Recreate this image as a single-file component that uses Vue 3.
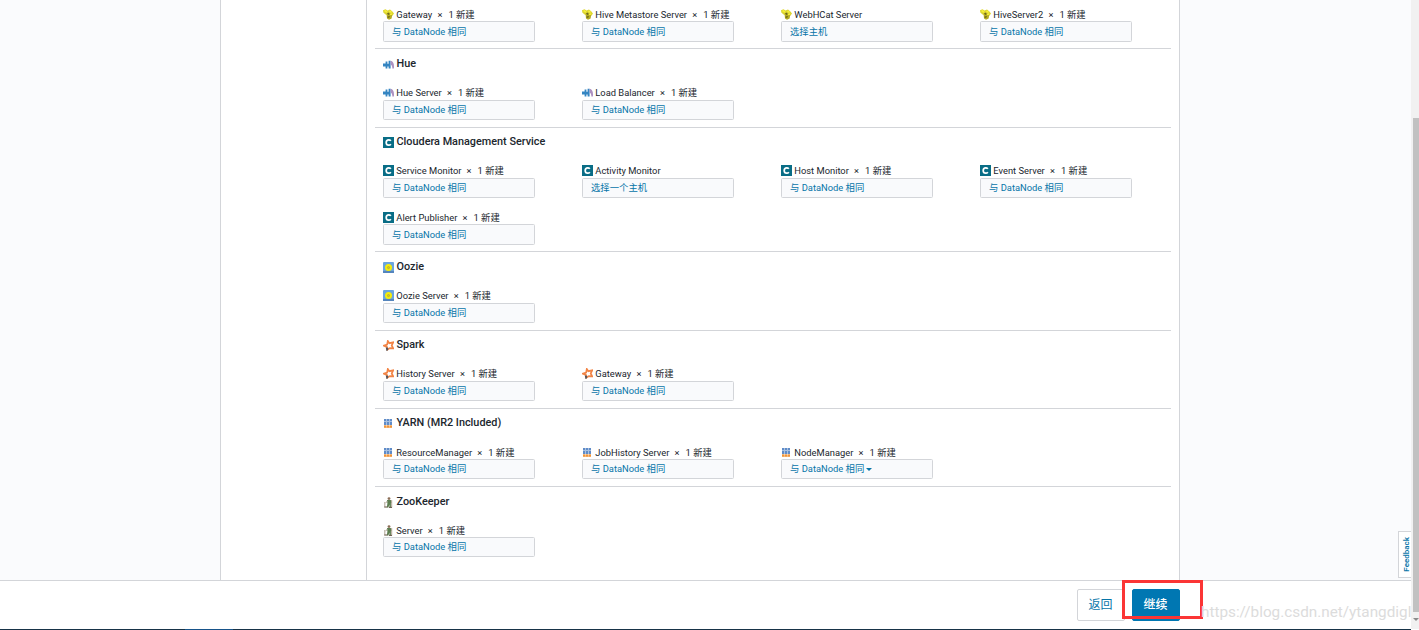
<template>
  <div class="page">
    <svg class="defs" aria-hidden="true">
      <symbol id="icon-hive" viewBox="0 0 11 11">
        <path d="M0 1.2 2.5.2l2 1.2L7 .6l2.2 1.6L11 4.5 9.4 6.8 6 6.4 2.5 5.6.3 3.4z" fill="#dcd632" />
        <path d="M3.5 4.6 7 4l2.2 2-.6 3.4L6 10.8 4 9.6z" fill="#b5ac24" />
        <path d="M4 4.4 5.6 3.6l1 1.4-1 1zM4.5 7.6l2.4-.6-.4 1.4-1.8.7z" fill="#6d661a" />
        <path d="M1.6 1.5 4 3M6.5 2l2 1.4M7 5.4l2-.4" stroke="#f7ef3b" stroke-width="1.5" />
      </symbol>
      <symbol id="icon-hue" viewBox="0 0 11 11">
        <path d="M0 4.6h2.6V2.6h1.8v2.2h1.2V1.8h2V9.6h-2V7.4H4.4v2H2.6V7.4H0z" fill="#3485c2" />
        <path d="M7.6 1.8Q11.6 2.6 10.9 9.6H9.3Q9.6 6.4 7.6 5.6z" fill="#ad91c1" />
      </symbol>
      <symbol id="icon-cloudera" viewBox="0 0 11 11">
        <path d="M0 0h11v11H0z" fill="#096d86" />
        <path d="M7.9 3.8Q7 2.8 5.7 2.8 3.2 2.8 3.2 5.5t2.5 2.7Q7 8.2 7.9 7.2" fill="none" stroke="#fff" stroke-width="1.7" />
      </symbol>
      <symbol id="icon-oozie" viewBox="0 0 11 11">
        <rect width="11" height="11" rx="1" fill="#6ba5df" />
        <path d="M0 9h11v2H0z" fill="#5585bd" />
        <circle cx="5.5" cy="5.6" r="3.5" fill="#f4ec0c" />
        <circle cx="5.5" cy="5.6" r="1.1" fill="#d8bf31" stroke="#9ba03c" stroke-width=".5" />
      </symbol>
      <symbol id="icon-spark" viewBox="0 0 11 11">
        <path d="m4.8 1 1.5 2.2 3.9-.8-1.5 3 1.5 3-3.4-.3-2.3 1.5-.6-2.7L.8 5.6l3.3-1z" fill="none" stroke="#f28445" stroke-width="1.7" />
        <path d="m2.8 7.4 2.5.4-.3 2.4-1.6.7z" fill="#55555b" />
      </symbol>
      <symbol id="icon-yarn" viewBox="0 0 11 11">
        <path d="M1 1h8v6H1z" fill="#a9c1e1" />
        <path d="M1 1h2v2H1zm3 0h2v2H4zm3 0h2v2H7zM1 4h2v3H1zm3 0h2v3H4zm3 0h2v3H7z" fill="#5f8cc8" />
        <path d="M1 7.4h8v2.6H1z" fill="#f6bd80" />
        <path d="M1 7.6h2v2H1zm3 0h2v2H4zm3 0h2v2H7z" fill="#f0943a" />
      </symbol>
      <symbol id="icon-zookeeper" viewBox="0 0 11 11">
        <circle cx="6" cy="1.6" r="1.4" fill="#8b6e57" />
        <path d="M4 3h3.8l1 2.6-.9.6v4.3H6.4V7.6l-1 3H3.8L4.4 6.5z" fill="#5d7e50" />
        <path d="M4.4 4 2.6 6.2M1.8 5v5.5M8.7 3v7.5" stroke="#b0a596" />
        <path d="M1.4 10h3M6 10.4h3" stroke="#665747" />
      </symbol>
    </svg>

    <div class="viewport">
      <div class="content">
        <aside class="side"></aside>
        <div class="steps"></div>
        <main class="panel">
          <section v-for="(service, i) in services" :key="i" class="service">
            <h4 v-if="service.name" class="service-name">
              <svg class="icon"><use :href="'#icon-' + service.icon" /></svg>
              <span>{{ service.name }}</span>
            </h4>
            <div class="roles">
              <div v-for="role in service.roles" :key="role.name" class="role">
                <div class="role-label">
                  <svg class="icon"><use :href="'#icon-' + service.icon" /></svg>
                  <span class="role-name">{{ role.name }}</span>
                  <template v-if="!role.empty">
                    <span class="times">×</span>
                    <span class="count">1 新建</span>
                  </template>
                </div>
                <button class="host-select" type="button">
                  <span v-if="role.empty">{{ role.empty }}</span>
                  <span v-else>与 DataNode 相同</span>
                  <i v-if="role.menu" class="caret"></i>
                </button>
              </div>
            </div>
          </section>
        </main>
        <div class="margin">
          <a class="feedback"><span>Feedback</span></a>
        </div>
      </div>
      <footer class="footer">
        <button class="btn" type="button">返回</button>
        <button class="btn btn-primary" type="button">继续</button>
        <div class="highlight"></div>
        <span class="watermark">https://blog.csdn.net/ytangdigl</span>
      </footer>
      <div class="taskbar"><i></i></div>
    </div>
    <div class="scrollbar">
      <div class="thumb"></div>
      <i class="arrow"></i>
    </div>
  </div>
</template>

<script setup>
const services = [
  {
    icon: 'hive',
    roles: [
      { name: 'Gateway' },
      { name: 'Hive Metastore Server' },
      { name: 'WebHCat Server', empty: '选择主机' },
      { name: 'HiveServer2' }
    ]
  },
  { name: 'Hue', icon: 'hue', roles: [{ name: 'Hue Server' }, { name: 'Load Balancer' }] },
  {
    name: 'Cloudera Management Service',
    icon: 'cloudera',
    roles: [
      { name: 'Service Monitor' },
      { name: 'Activity Monitor', empty: '选择一个主机' },
      { name: 'Host Monitor' },
      { name: 'Event Server' },
      { name: 'Alert Publisher' }
    ]
  },
  { name: 'Oozie', icon: 'oozie', roles: [{ name: 'Oozie Server' }] },
  { name: 'Spark', icon: 'spark', roles: [{ name: 'History Server' }, { name: 'Gateway' }] },
  {
    name: 'YARN (MR2 Included)',
    icon: 'yarn',
    roles: [{ name: 'ResourceManager' }, { name: 'JobHistory Server' }, { name: 'NodeManager', menu: true }]
  },
  { name: 'ZooKeeper', icon: 'zookeeper', roles: [{ name: 'Server' }] }
]
</script>

<style>
body {
  margin: 0;
  overflow: hidden;
}
</style>

<style scoped>
.page {
  display: flex;
  height: 630px;
  overflow: hidden;
  font-family: Roboto, "Noto Sans CJK SC", sans-serif;
  color: #20262d;
  background: #fff;
}

.defs {
  position: absolute;
  width: 0;
  height: 0;
}

.viewport {
  flex: 1;
  min-width: 0;
  display: flex;
  flex-direction: column;
}

.content {
  display: flex;
  height: 580px;
  overflow: hidden;
}

.side {
  width: 220px;
  background: #fafbfd;
  border-right: 1px solid #d3d5d9;
}

.steps {
  width: 145px;
}

.panel {
  box-sizing: border-box;
  width: 814px;
  height: 580px;
  padding: 0 8px;
  border: 1px solid #d3d5d9;
  border-width: 0 1px;
  display: flex;
  flex-direction: column;
  justify-content: flex-end;
}

.service {
  flex-shrink: 0;
  border-bottom: 1px solid #d3d5d9;
}

.service:last-child {
  border-bottom: none;
  margin-bottom: 15.95px;
}

.service-name {
  display: flex;
  align-items: center;
  gap: 2.5px;
  box-sizing: border-box;
  height: 30.6px;
  margin: 0;
  padding: 0 0 2px 8px;
  font-size: 10.85px;
  font-weight: 500;
  line-height: 13px;
}

.service-name .icon {
  margin-top: 2px;
}

.icon {
  flex-shrink: 0;
  width: 11px;
  height: 11px;
}

.roles {
  display: flex;
  flex-wrap: wrap;
  padding-left: 8px;
}

.role {
  width: 152px;
  height: 46.6px;
  margin-right: 47px;
}

.role:nth-child(4n) {
  margin-right: -20px;
}

.role-label {
  display: flex;
  align-items: center;
  height: 12.6px;
  padding: 7px 0 0;
  font-size: 9.36px;
  line-height: 12px;
  white-space: nowrap;
}

.role-label .icon {
  margin-bottom: 1px;
}

.role-name {
  margin-left: 2.3px;
}

.times {
  margin: 0 6px 0 5.2px;
}

.host-select {
  display: flex;
  align-items: center;
  box-sizing: border-box;
  width: 152px;
  height: 20.4px;
  padding: 0 8px;
  border: 1px solid #d3d5d9;
  border-radius: 1.5px;
  background: #f9fafc;
  color: #0775a8;
  font: inherit;
  font-size: 9.36px;
  line-height: 12px;
  cursor: pointer;
}

.caret {
  margin-left: 2px;
  border: 3px solid transparent;
  border-top-color: #0775a8;
  border-bottom: 0;
}

.margin {
  flex: 1;
  display: flex;
  align-items: flex-end;
  justify-content: flex-end;
  background: #fafbfd;
}

.feedback {
  display: flex;
  align-items: center;
  justify-content: center;
  box-sizing: border-box;
  width: 13px;
  height: 47px;
  margin-bottom: 2px;
  padding: 0 0 1px 2px;
  border: 1px solid #d3d5d9;
  border-right: 0;
  background: #fff;
  color: #0775a8;
  font-size: 8px;
  font-weight: 600;
}

.feedback span {
  writing-mode: vertical-rl;
  transform: rotate(180deg);
}

.footer {
  position: relative;
  box-sizing: border-box;
  display: flex;
  justify-content: flex-end;
  gap: 7px;
  height: 49px;
  padding: 8px 231px 0 0;
  border-top: 1px solid #d3d5d9;
  background: #fff;
}

.btn {
  box-sizing: border-box;
  width: 48px;
  height: 32px;
  padding: 0 1px 3px 0;
  border: 1px solid #d3d5d9;
  border-radius: 2px;
  background: #fff;
  color: #0775a8;
  font: inherit;
  font-size: 12px;
  cursor: pointer;
}

.btn-primary {
  border-color: #0077b2;
  background: #0077b2;
  color: #fff;
  font-weight: 500;
}

.highlight {
  position: absolute;
  top: -1px;
  left: 1122px;
  box-sizing: border-box;
  width: 81px;
  height: 39px;
  border: 3px solid #fb3535;
}

.watermark {
  position: absolute;
  top: 21px;
  left: 1201px;
  font-size: 15.3px;
  line-height: 20px;
  white-space: nowrap;
  color: #dcdcdc;
}

.taskbar {
  height: 1px;
  background: #173347;
}

.taskbar i {
  display: block;
  width: 48px;
  height: 1px;
  margin-left: 185px;
  background: #17548a;
}

.scrollbar {
  display: flex;
  flex-direction: column;
  align-items: flex-end;
  width: 8px;
  height: 629px;
  background: #f1f1f1;
}

.thumb {
  width: 6px;
  height: 494px;
  margin-top: 118px;
  background: #c1c1c1;
}

.arrow {
  margin-top: 6px;
  border: 3px solid transparent;
  border-top-color: #8b8b8b;
  border-bottom: 0;
}
</style>
